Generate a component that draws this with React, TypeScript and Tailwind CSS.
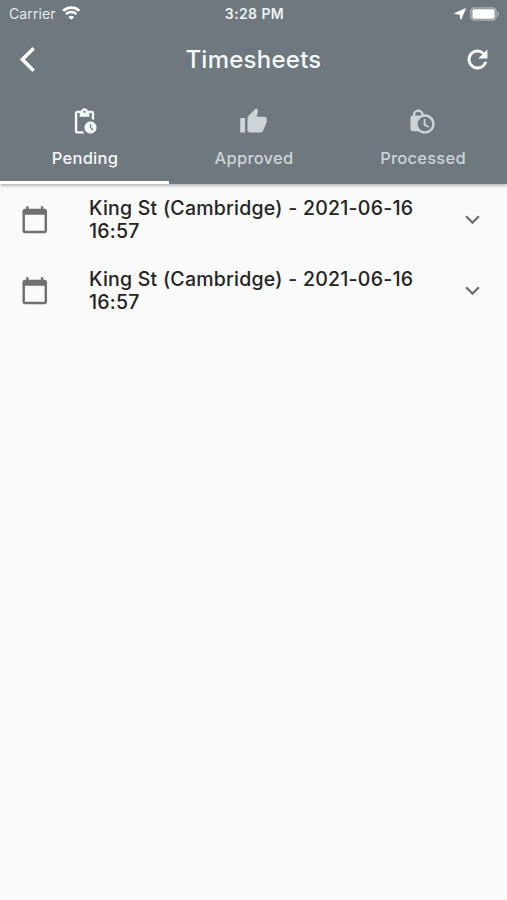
import {
  MdPendingActions,
  MdThumbUp,
  MdLockClock,
  MdRefresh,
  MdCalendarToday,
  MdExpandMore,
  MdArrowBackIosNew,
} from "react-icons/md";

const tabs = [
  { label: "Pending", Icon: MdPendingActions, active: true },
  { label: "Approved", Icon: MdThumbUp, active: false },
  { label: "Processed", Icon: MdLockClock, active: false },
];

const entries = [
  { id: 1, title: "King St (Cambridge) - 2021-06-16 16:57" },
  { id: 2, title: "King St (Cambridge) - 2021-06-16 16:57" },
];

function StatusBar() {
  return (
    <div className="grid h-[27px] grid-cols-3 items-center pl-[9px] pr-[7px] text-[14px] leading-none">
      <div className="flex items-center gap-[6px]">
        <span className="tracking-[0.1px] text-[#e4e9ec]">Carrier</span>
        <svg className="-mt-[2px]" width="18.5" height="14" viewBox="0 0 19 14" fill="none" stroke="#fff">
          <path d="M1.2 4.8a11.8 11.8 0 0 1 16.6 0" strokeWidth="2.8" />
          <path d="M4.2 8.1a7.5 7.5 0 0 1 10.6 0" strokeWidth="2.5" />
          <path d="M9.5 14 6.5 11a4.2 4.2 0 0 1 6 0z" fill="#fff" stroke="none" />
        </svg>
      </div>
      <span className="pt-px text-center text-[14px] font-semibold tracking-[0.4px] text-[#edf1f4]">3:28 PM</span>
      <div className="flex items-center justify-end gap-[4px]">
        <svg width="12" height="12" viewBox="0 0 12 12" fill="#fff">
          <path d="M11.4.7 6.9 11.2 6.2 6.2.7 5.5z" stroke="#fff" strokeWidth="1" strokeLinejoin="round" />
        </svg>
        <svg width="30" height="14" viewBox="0 0 30 14">
          <rect x=".8" y=".8" width="25.4" height="12.4" rx="3.6" fill="#fff" fillOpacity=".12" stroke="#fff" strokeOpacity=".4" strokeWidth="1.3" />
          <rect x="2.4" y="2.3" width="22.2" height="9.4" rx="1.6" fill="#fff" />
          <path d="M27.7 4.8c2 .9 2 3.5 0 4.4z" fill="#fff" fillOpacity=".45" />
        </svg>
      </div>
    </div>
  );
}

export default function App() {
  return (
    <div className="flex h-[900px] w-[507px] flex-col bg-[#fafafa] font-['Inter','Liberation_Sans',sans-serif]">
      <header className="z-10 flex h-[184px] shrink-0 flex-col bg-[#6f787e] shadow-[0_1px_4px_rgba(0,0,0,0.4)]">
        <StatusBar />
        <div className="flex h-[66px] items-center justify-between pb-px pl-[13px] pr-[15px] text-white">
          <MdArrowBackIosNew className="size-[29px] [&>path:last-child]:stroke-[0.6]" />
          <h1 className="pl-[2px] pt-px text-[24px] font-medium leading-none tracking-[0.25px] text-[#f3f8fa]">
            Timesheets
          </h1>
          <MdRefresh className="size-[29px] [&>path:last-child]:stroke-[0.4]" />
        </div>
        <nav className="grid flex-1 grid-cols-3">
          {tabs.map(({ label, Icon, active }) => (
            <button
              key={label}
              className={`flex flex-col items-center border-b-[3px] pt-[14px] ${
                active ? "border-white text-[#f3f8fa]" : "border-transparent text-[#ccd4d8]"
              }`}
            >
              <Icon className="size-[29px]" />
              <span className="mt-[12px] pl-px text-[16.5px] font-medium leading-[20px] tracking-[0.25px]">{label}</span>
            </button>
          ))}
        </nav>
      </header>
      <main>
        {entries.map((entry) => (
          <div key={entry.id} className="flex h-[71px] items-center pl-[20px] pr-[20px]">
            <MdCalendarToday className="size-[29.5px] shrink-0 text-[#707070]" />
            <p className="ml-[39.5px] w-[340px] text-[19.5px] font-medium leading-[23px] tracking-[0.24px] text-[#242424]">
              {entry.title}
            </p>
            <MdExpandMore className="ml-auto size-[29px] shrink-0 text-[#707070]" />
          </div>
        ))}
      </main>
    </div>
  );
}
